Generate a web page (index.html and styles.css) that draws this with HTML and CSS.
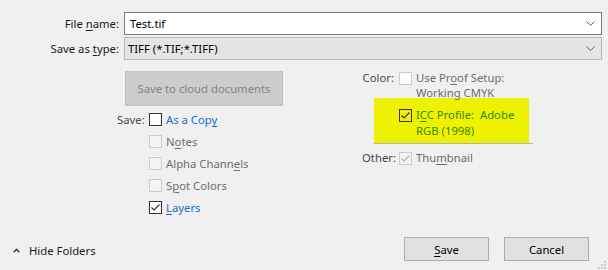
FILE: index.html
```html
<!DOCTYPE html>
<html lang="en">
<head>
    <meta charset="UTF-8">
    <title>Save As</title>
    <link rel="stylesheet" href="styles.css">
</head>
<body>
    <div class="dialog">
        <!-- 文件名和类型 -->
        <div class="fields">
            <span class="field-label">File <u>n</u>ame:</span>
            <div class="combo combo-edit">
                <span>Test.tif</span>
                <svg class="chevron" width="9" height="5" viewBox="0 0 9 5"><path d="M0.5 0.5 L4.5 4.5 L8.5 0.5" fill="none" stroke="#606060" stroke-width="1"/></svg>
            </div>
            <span class="field-label">Save as <u>t</u>ype:</span>
            <div class="combo combo-select">
                <span>TIFF (*.TIF;*.TIFF)</span>
                <svg class="chevron" width="9" height="5" viewBox="0 0 9 5"><path d="M0.5 0.5 L4.5 4.5 L8.5 0.5" fill="none" stroke="#606060" stroke-width="1"/></svg>
            </div>
        </div>

        <!-- 选项 -->
        <div class="options">
            <div class="col-left">
                <button class="cloud-btn" disabled>Save to cloud documents</button>
                <div class="opt-group">
                    <span class="opt-label save-label">Save:</span>
                    <div class="opt-list">
                        <div class="check link"><span class="box"></span><span>As a Cop<u>y</u></span></div>
                        <div class="check disabled"><span class="box"></span><span>N<u>o</u>tes</span></div>
                        <div class="check disabled"><span class="box"></span><span>Alpha Chann<u>e</u>ls</span></div>
                        <div class="check disabled"><span class="box"></span><span>S<u>p</u>ot Colors</span></div>
                        <div class="check link checked"><span class="box"><svg viewBox="0 0 11 11"><path d="M1.5 5.5 L4 8 L9.5 2.5" fill="none" stroke="#333" stroke-width="1.2"/></svg></span><span><u>L</u>ayers</span></div>
                    </div>
                </div>
            </div>

            <div class="col-right">
                <div class="opt-row">
                    <span class="opt-label color-label">Color:</span>
                    <span class="box box-disabled box-white"></span>
                    <span class="opt-text disabled-text">Use Pr<u>o</u>of Setup:<br>Working CMYK</span>
                </div>
                <div class="highlight-wrap">
                    <div class="highlight">
                        <span class="box box-dark"><svg viewBox="0 0 11 11"><path d="M1.5 5.5 L4 8 L9.5 2.5" fill="none" stroke="#333" stroke-width="1.2"/></svg></span>
                        <span class="opt-text icc-text">I<u>C</u>C Profile:&nbsp; Adobe<br>RGB (1998)</span>
                    </div>
                </div>
                <div class="opt-row other-row">
                    <span class="opt-label color-label">Other:</span>
                    <span class="box box-disabled"><svg viewBox="0 0 11 11"><path d="M1.5 5.5 L4 8 L9.5 2.5" fill="none" stroke="#b0b0b0" stroke-width="1.2"/></svg></span>
                    <span class="opt-text disabled-text">Thu<u>m</u>bnail</span>
                </div>
            </div>
        </div>

        <!-- 底部按钮 -->
        <div class="footer">
            <div class="hide-folders">
                <svg width="7" height="5" viewBox="0 0 7 5"><path d="M0.8 4.2 L3.5 1.3 L6.2 4.2" fill="none" stroke="#404040" stroke-width="1.6"/></svg>
                <span>Hide Folders</span>
            </div>
            <div class="buttons">
                <button class="btn"><u>S</u>ave</button>
                <button class="btn">Cancel</button>
            </div>
        </div>
        <svg class="grip" width="8" height="8" viewBox="0 0 8 8">
            <rect x="6" y="0" width="2" height="2" fill="#c8c8c8"/>
            <rect x="3" y="3" width="2" height="2" fill="#c8c8c8"/>
            <rect x="6" y="3" width="2" height="2" fill="#c8c8c8"/>
            <rect x="0" y="6" width="2" height="2" fill="#c8c8c8"/>
            <rect x="3" y="6" width="2" height="2" fill="#c8c8c8"/>
            <rect x="6" y="6" width="2" height="2" fill="#c8c8c8"/>
        </svg>
    </div>
</body>
</html>
```

FILE: styles.css
```css
/* 全局样式 */
body {
    margin: 0;
    padding: 0;
    background: #f0f0f0;
    font-family: 'Noto Sans', 'Liberation Sans', sans-serif;
    font-size: 11.3px;
    color: #000;
}

u {
    text-decoration-thickness: 1px;
    text-underline-offset: 2px;
}

.dialog {
    position: relative;
    height: 270px;
    display: flex;
    flex-direction: column;
}

/* 文件名和类型 */
.fields {
    display: grid;
    grid-template-columns: 119px 1fr;
    grid-auto-rows: 23px;
    column-gap: 5px;
    row-gap: 2px;
    padding: 12px 6px 0 0;
}
.field-label {
    text-align: right;
    line-height: 23px;
    color: #1a1a1a;
}
.combo {
    display: flex;
    align-items: center;
    justify-content: space-between;
    box-sizing: border-box;
    padding: 0 6px 0 5px;
}
.combo-edit {
    background: #fff;
    border: 1px solid #7a7a7a;
}
.combo-select {
    background: #e5e5e5;
    border: 1px solid #b8b8b8;
    padding-left: 3px;
}

/* 选项区域 */
.options {
    display: flex;
    margin-top: 11px;
    padding-left: 117px;
}
.col-left {
    width: 245px;
}
.cloud-btn {
    margin-left: 8px;
    width: 158px;
    height: 35px;
    background: #cccccc;
    border: 1px solid #c2c2c2;
    color: #838383;
    font-family: inherit;
    font-size: inherit;
    padding: 0;
}
.opt-group {
    display: flex;
    margin-top: 7px;
}
.opt-label {
    text-align: right;
    color: #4a4a4a;
    line-height: 13px;
}
.save-label {
    width: 27px;
    margin-right: 5px;
}
.check {
    display: flex;
    align-items: center;
    height: 13px;
    line-height: 13px;
    margin-bottom: 9px;
}
.box {
    display: inline-flex;
    flex: none;
    box-sizing: border-box;
    width: 13px;
    height: 13px;
    border: 1px solid #333;
    background: #fff;
    margin-right: 4px;
}
.box svg {
    width: 11px;
    height: 11px;
}
.check.disabled .box {
    border-color: #cccccc;
    background: #f4f4f4;
}
.check.disabled {
    color: #6d6d6d;
}
.link {
    color: #1b6ac9;
}

/* 右侧选项 */
.col-right {
    margin-top: -1px;
}
.opt-row {
    display: flex;
    align-items: flex-start;
}
.opt-row .opt-label {
    line-height: 15px;
}
.color-label {
    width: 32px;
    margin-right: 5px;
}
.opt-row .box {
    margin-top: 2px;
}
.opt-text {
    line-height: 15px;
}
.disabled-text {
    color: #6d6d6d;
}
.box-disabled {
    border-color: #cccccc;
    background: #f4f4f4;
}
.box-white {
    background: #fff;
}
.highlight-wrap {
    margin: -2px 0 0 12px;
    width: 159px;
    border-bottom: 1px solid #b4b4b4;
}
.highlight {
    display: flex;
    align-items: flex-start;
    width: 155px;
    box-sizing: border-box;
    height: 45px;
    padding: 9px 0 0 25px;
    background: #eef200;
}
.box-dark {
    margin-top: 2px;
    background: transparent;
}
.icc-text {
    line-height: 16px;
    color: #338a12;
}
.other-row {
    margin-top: 6px;
}

/* 底部 */
.footer {
    margin-top: auto;
    display: flex;
    justify-content: space-between;
    align-items: flex-start;
    padding: 0 19px 9px 13px;
}
.hide-folders {
    display: flex;
    align-items: center;
    gap: 9px;
    margin-top: 6px;
    color: #1a1a1a;
}
.buttons {
    display: flex;
    gap: 15px;
}
.btn {
    width: 85px;
    height: 24px;
    background: #e1e1e1;
    border: 1px solid #adadad;
    font-family: inherit;
    font-size: inherit;
    color: #000;
    padding: 0;
}
.grip {
    position: absolute;
    right: 2px;
    bottom: 1px;
}
```
